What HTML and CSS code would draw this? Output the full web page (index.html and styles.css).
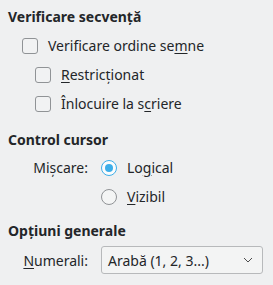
FILE: index.html
```html
<!DOCTYPE html>
<html>
<head>
  <title>Opțiuni</title>
  <link rel="stylesheet" href="styles.css">
</head>
<body>
  <div class="panel">
    <h2 class="group-title">Verificare secvență</h2>
    <div class="row level1">
      <span class="check"></span>
      <span class="label">Verificare ordine se<u>m</u>ne</span>
    </div>
    <div class="row level2">
      <span class="check"></span>
      <span class="label"><u>R</u>estricționat</span>
    </div>
    <div class="row level2">
      <span class="check"></span>
      <span class="label">Înlocuire la s<u>c</u>riere</span>
    </div>

    <h2 class="group-title spaced">Control cursor</h2>
    <div class="form-grid">
      <span class="field-label">Mișcare:</span>
      <div class="row">
        <span class="radio checked"></span>
        <span class="label">Lo<u>g</u>ical</span>
      </div>
      <span></span>
      <div class="row">
        <span class="radio"></span>
        <span class="label"><u>V</u>izibil</span>
      </div>
    </div>

    <h2 class="group-title spaced tight">Opțiuni generale</h2>
    <div class="form-grid combo-grid">
      <span class="field-label"><u>N</u>umerali:</span>
      <div class="combo">
        <span>Arabă (1, 2, 3...)</span>
        <svg width="10" height="6" viewBox="0 0 10 6">
          <path d="M1 1 L5 5 L9 1" fill="none" stroke="#4d4d4d" stroke-width="1"/>
        </svg>
      </div>
    </div>
  </div>
</body>
</html>
```

FILE: styles.css
```css
body {
  margin: 0;
  background-color: #eff0f1;
  font-family: "Noto Sans", "Open Sans", sans-serif;
  font-size: 14px;
  color: #232629;
}

.panel {
  padding: 7px 8px 0 8px;
}

.group-title {
  margin: 0;
  font-size: 14px;
  font-weight: bold;
  line-height: 20px;
  height: 20px;
}

.group-title.spaced {
  margin-top: 12px;
}

.group-title.tight {
  margin-top: 10px;
}

u {
  text-decoration: underline;
  text-underline-offset: 2px;
}

.row {
  display: flex;
  align-items: center;
  height: 29px;
}

.level1 {
  margin-top: 4px;
  padding-left: 14px;
}

.level2 {
  padding-left: 27px;
}

.check {
  width: 14px;
  height: 14px;
  border: 1px solid #909396;
  border-radius: 3px;
  background-color: #f1f2f3;
  margin-right: 10px;
  flex-shrink: 0;
}

.radio {
  width: 14px;
  height: 14px;
  border: 1px solid #909396;
  border-radius: 50%;
  background-color: #f4f5f5;
  margin-right: 10px;
  flex-shrink: 0;
  position: relative;
}

.radio.checked {
  border-color: #3daee9;
  background-color: #fcfcfc;
}

.radio.checked::after {
  content: "";
  position: absolute;
  left: 3px;
  top: 3px;
  width: 8px;
  height: 8px;
  border-radius: 50%;
  background-color: #3daee9;
}

.form-grid {
  display: grid;
  grid-template-columns: 80px auto;
  column-gap: 13px;
  align-items: center;
  margin-top: 3px;
}

.field-label {
  text-align: right;
}

.combo-grid {
  margin-top: 5px;
}

.combo {
  display: flex;
  align-items: center;
  justify-content: space-between;
  height: 26px;
  width: 145px;
  padding: 0 9px 0 6px;
  border: 1px solid #b7b9bb;
  border-radius: 3px;
  background-color: #f3f4f4;
}
```
